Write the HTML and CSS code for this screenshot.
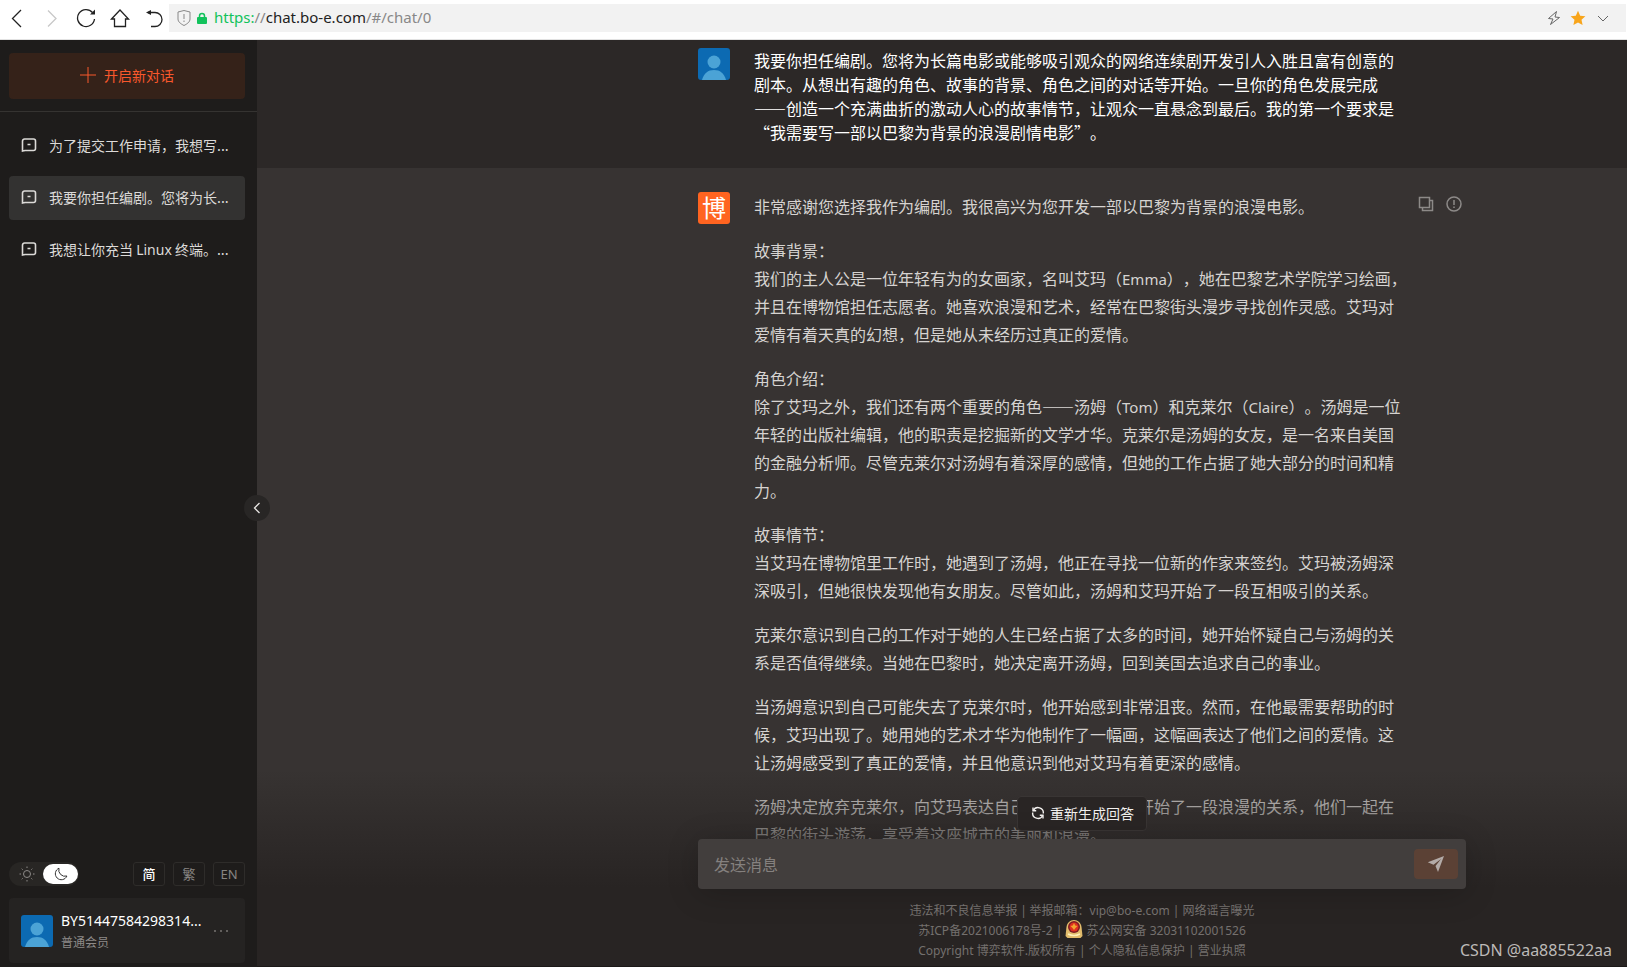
FILE: index.html
```html
<!DOCTYPE html>
<html lang="zh-CN">
<head>
<meta charset="utf-8">
<title>chat.bo-e.com</title>
<link rel="stylesheet" href="styles.css">
</head>
<body>
<header class="browser">
  <button class="nav-btn" aria-label="后退"><svg width="20" height="20" viewBox="0 0 20 20"><path d="M13 2 4.500 10.500 13 19"/></svg></button>
  <button class="nav-btn nav-off" aria-label="前进"><svg width="20" height="20" viewBox="0 0 20 20"><path d="M6 2.500 14 10.500 6 18.500"/></svg></button>
  <button class="nav-btn" aria-label="刷新"><svg width="20" height="20" viewBox="0 0 20 20"><path d="M16.500 4.500A8.500 8.500 0 1 0 18.500 11"/><path class="solid" d="M19 1.500v5h-5z"/></svg></button>
  <button class="nav-btn" aria-label="主页"><svg width="20" height="20" viewBox="0 0 20 20"><path d="M1.500 11 10 2l8.500 9H15.500v7.500h-11V11z"/></svg></button>
  <button class="nav-btn" aria-label="撤销"><svg width="20" height="20" viewBox="0 0 20 20"><path d="M4 4.500h7a7 7 0 0 1 0 14H7"/><path class="solid" d="M2 4.500 7 2v5z"/></svg></button>
  <div class="address">
    <svg class="shield" width="14" height="18" viewBox="0 0 14 18"><path d="M7 1.500 13 3v7c0 3-3 5-6 6.500C4 15 1 13 1 10V3z"/><path d="M7 5v5M7 11.500v1.500"/></svg>
    <svg class="lock" width="10" height="12" viewBox="0 0 10 12"><rect y="5" width="10" height="7" rx="1"/><path d="M2.500 6V4a2.500 2.500 0 0 1 5 0v2"/></svg>
    <div class="url"><span class="scheme">https:</span>//<span class="host">chat.bo-e.com</span>/#/chat/0</div>
    <svg class="tool" width="14" height="16" viewBox="0 0 14 16"><path d="M9.500 1.500 1.500 8.500 6 9 3.500 14.500 12.500 7.500 8 7z"/></svg>
    <svg class="star" width="16" height="16" viewBox="0 0 16 16"><path d="M8 .8l2.200 4.900 5.200.6-3.900 3.500 1.100 5.300L8 12.400l-4.600 2.700 1.100-5.300L.6 6.300l5.200-.6z"/></svg>
    <svg class="tool" width="12" height="16" viewBox="0 0 12 16"><path d="m1 6 5 5 5-5"/></svg>
  </div>
</header>

<div class="app">
  <aside class="sidebar">
    <div class="new-wrap">
      <button class="new-chat"><svg width="16" height="16" viewBox="0 0 16 16"><path d="M8 0v16M0 8h16"/></svg>开启新对话</button>
    </div>
    <nav class="history">
      <a class="item" href="#1"><svg width="16" height="16" viewBox="0 0 16 16"><path d="M1.500 14V4a2 2 0 0 1 2-2h9a2 2 0 0 1 2 2v7.500a2 2 0 0 1-2 2H4zM6.500 7.500h3"/></svg><span>为了提交工作申请，我想写...</span></a>
      <a class="item current" href="#2"><svg width="16" height="16" viewBox="0 0 16 16"><path d="M1.500 14V4a2 2 0 0 1 2-2h9a2 2 0 0 1 2 2v7.500a2 2 0 0 1-2 2H4zM6.500 7.500h3"/></svg><span>我要你担任编剧。您将为长...</span></a>
      <a class="item" href="#3"><svg width="16" height="16" viewBox="0 0 16 16"><path d="M1.500 14V4a2 2 0 0 1 2-2h9a2 2 0 0 1 2 2v7.500a2 2 0 0 1-2 2H4zM6.500 7.500h3"/></svg><span>我想让你充当 <span lang="en">Linux</span> 终端。...</span></a>
    </nav>
    <div class="prefs">
      <button class="theme" role="switch" aria-checked="true" aria-label="深色模式">
        <span class="sun"><svg width="16" height="16" viewBox="0 0 16 16"><circle cx="8" cy="8" r="3.500"/><path d="M8 .5v1.500M8 14v1.500M.5 8H2M14 8h1.500M2.700 2.700l1 1M12.300 12.300l1 1M13.300 2.700l-1 1M3.700 12.300l-1 1"/></svg></span>
        <span class="moon"><svg width="14" height="14" viewBox="0 0 14 14"><path d="M5 1.200A6 6 0 1 0 12.900 9 6.300 6.300 0 0 1 5 1.200z"/></svg></span>
      </button>
      <button class="lang on">简</button>
      <button class="lang">繁</button>
      <button class="lang" lang="en">EN</button>
    </div>
    <div class="account">
      <svg class="avatar" width="32" height="32" viewBox="0 0 32 32"><rect width="32" height="32" rx="3" fill="#0c6ab2"/><circle cx="16" cy="14" r="6.500" fill="#4ba3d6"/><path d="M4 32c2-7 6-10 12-10s10 3 12 10z" fill="#4ba3d6"/></svg>
      <div class="who"><div class="name" lang="en">BY51447584298314...</div><div class="level">普通会员</div></div>
      <button class="more" aria-label="更多"><svg width="16" height="4" viewBox="0 0 16 4"><circle cx="2" cy="2" r="1"/><circle cx="8" cy="2" r="1"/><circle cx="14" cy="2" r="1"/></svg></button>
    </div>
    <button class="collapse" aria-label="收起"><svg width="10" height="12" viewBox="0 0 10 12"><path d="M7.500 1 2.500 6l5 5"/></svg></button>
  </aside>

  <main class="chat">
    <section class="row user">
      <div class="column">
        <svg class="avatar" width="32" height="32" viewBox="0 0 32 32"><rect width="32" height="32" rx="3" fill="#0c6ab2"/><circle cx="16" cy="14" r="6.500" fill="#4ba3d6"/><path d="M4 32c2-7 6-10 12-10s10 3 12 10z" fill="#4ba3d6"/></svg>
        <p class="text">我要你担任编剧。您将为长篇电影或能够吸引观众的网络连续剧开发引人入胜且富有创意的剧本。从想出有趣的角色、故事的背景、角色之间的对话等开始。一旦你的角色发展完成——创造一个充满曲折的激动人心的故事情节，让观众一直悬念到最后。我的第一个要求是“我需要写一部以巴黎为背景的浪漫剧情电影”。</p>
      </div>
    </section>
    <section class="row bot">
      <div class="column">
        <div class="avatar logo">博</div>
        <div class="text">
          <p>非常感谢您选择我作为编剧。我很高兴为您开发一部以巴黎为背景的浪漫电影。</p>
          <p>故事背景：<br>我们的主人公是一位年轻有为的女画家，名叫艾玛（<span lang="en">Emma</span>），她在巴黎艺术学院学习绘画，并且在博物馆担任志愿者。她喜欢浪漫和艺术，经常在巴黎街头漫步寻找创作灵感。艾玛对爱情有着天真的幻想，但是她从未经历过真正的爱情。</p>
          <p>角色介绍：<br>除了艾玛之外，我们还有两个重要的角色——汤姆（<span lang="en">Tom</span>）和克莱尔（<span lang="en">Claire</span>）。汤姆是一位年轻的出版社编辑，他的职责是挖掘新的文学才华。克莱尔是汤姆的女友，是一名来自美国的金融分析师。尽管克莱尔对汤姆有着深厚的感情，但她的工作占据了她大部分的时间和精力。</p>
          <p>故事情节：<br>当艾玛在博物馆里工作时，她遇到了汤姆，他正在寻找一位新的作家来签约。艾玛被汤姆深深吸引，但她很快发现他有女朋友。尽管如此，汤姆和艾玛开始了一段互相吸引的关系。</p>
          <p>克莱尔意识到自己的工作对于她的人生已经占据了太多的时间，她开始怀疑自己与汤姆的关系是否值得继续。当她在巴黎时，她决定离开汤姆，回到美国去追求自己的事业。</p>
          <p>当汤姆意识到自己可能失去了克莱尔时，他开始感到非常沮丧。然而，在他最需要帮助的时候，艾玛出现了。她用她的艺术才华为他制作了一幅画，这幅画表达了他们之间的爱情。这让汤姆感受到了真正的爱情，并且他意识到他对艾玛有着更深的感情。</p>
          <p>汤姆决定放弃克莱尔，向艾玛表达自己的爱意。他们便开始了一段浪漫的关系，他们一起在巴黎的街头游荡，享受着这座城市的美丽和浪漫。</p>
        </div>
        <div class="actions">
          <button aria-label="复制"><svg width="16" height="16" viewBox="0 0 16 16"><path d="M1.500 1.500h10v10h-10zM11.500 4.500h3v10h-10v-3"/></svg></button>
          <button aria-label="反馈"><svg width="16" height="16" viewBox="0 0 16 16"><circle cx="8" cy="8" r="7"/><path d="M8 4v5M8 10.500V12"/></svg></button>
        </div>
      </div>
    </section>

    <footer class="dock">
      <div class="dock-column">
        <button class="regen"><svg width="14" height="14" viewBox="0 0 14 14"><path d="M2.300 4.500A5.300 5.300 0 0 1 12.300 7.500M11.700 9.500A5.300 5.300 0 0 1 1.700 6.500"/><path d="M2 1.500v3.200h3.200M12 12.500V9.300H8.800"/></svg>重新生成回答</button>
        <form class="composer">
          <input class="message" type="text" placeholder="发送消息" aria-label="发送消息">
          <button class="send" type="button" aria-label="发送"><svg width="18" height="18" viewBox="0 0 18 18"><path d="M17 1 .8 7.200l5.700 2.600L14 4 8.500 11l2.500 6z"/></svg></button>
        </form>
        <div class="legal">
          <div><a href="#r">违法和不良信息举报</a> <span lang="en">|</span> 举报邮箱：<span lang="en">vip@bo-e.com | </span><a href="#y">网络谣言曝光</a></div>
          <div>苏<span lang="en">ICP</span>备<span lang="en">2021006178</span>号<span lang="en">-2 | </span><svg class="police" width="18" height="18" viewBox="0 0 18 18"><path d="M9 0c4 0 7 3 7.500 7l1 9-2 2h-13l-2-2 1-9C2 3 5 0 9 0z" fill="#e2bc6c"/><circle cx="9" cy="7" r="6" fill="#7d1c22"/><circle cx="9" cy="7" r="4.500" fill="#df2f20"/><path d="m9 3 1.200 2.500 2.300.5-2 2L9 10 7.500 8l-2-2 2.300-.5z" fill="#f2a52f"/><path d="M3 14c4 2 8 2 12 0" stroke="#fff0b8" stroke-width="1.500"/></svg><span lang="en"> </span>苏公网安备<span lang="en"> 32031102001526</span></div>
          <div><span lang="en">Copyright </span>博弈软件.版权所有<span lang="en"> | </span><a href="#p">个人隐私信息保护</a><span lang="en"> | </span><a href="#l">营业执照</a></div>
        </div>
      </div>
      <span class="mark" lang="en">CSDN @aa885522aa</span>
    </footer>
  </main>
</div>
</body>
</html>
```
FILE: styles.css
```css
* { box-sizing: border-box; }
body {
  margin: 0;
  height: 100vh;
  display: flex;
  flex-direction: column;
  overflow: hidden;
  background: #1e1c1b;
  font-family: "Noto Sans CJK SC", "Noto Sans", sans-serif;
  font-size: 14px;
  text-spacing-trim: space-all;
}
button, input { font: inherit; color: inherit; border: 0; background: none; padding: 0; }
button { cursor: pointer; }
a { color: inherit; text-decoration: none; }
p { margin: 0; }
svg { flex: none; fill: none; stroke: currentColor; }
[lang="en"] { font-family: "Noto Sans", "Noto Sans CJK SC", sans-serif; }
span[lang="en"] { line-height: 1; }

/* Browser toolbar */
.browser {
  flex: none;
  display: flex;
  align-items: center;
  height: 40px;
  padding: 0 1px 4px 8px;
  background: #fff;
  border-bottom: 1px solid #e2e2e2;
  color: #222;
}
.nav-btn { display: flex; width: 20px; margin-right: 14px; stroke-width: 1.3; }
.nav-off { color: #c8c8c8; }
.nav-btn:nth-child(5) { margin-right: 5px; }
.browser .solid { fill: currentColor; stroke: none; }
.address {
  flex: 1;
  display: flex;
  align-items: center;
  height: 28px;
  padding: 0 17px 0 8px;
  background: #f2f2f2;
  color: #888;
}
.lock { margin: 0 7px 0 6px; color: #12c25c; stroke-width: 1.5; }
.lock rect { fill: currentColor; stroke: none; }
.url { flex: 1; font: 15px/20px "Noto Sans", sans-serif; padding-bottom: 1px; }
.scheme { color: #12c25c; }
.host { color: #222; }
.tool { color: #666; }
.star { margin: 0 11px 0 9px; fill: #f8a51b; stroke: none; }

/* Sidebar */
.app { flex: 1; min-height: 0; display: flex; }
.sidebar {
  position: relative;
  flex: none;
  display: flex;
  flex-direction: column;
  width: 257px;
  padding-bottom: 4px;
  background: #1e1c1b;
  color: #dcdad8;
}
.new-wrap { padding: 13px 12px 12px 9px; border-bottom: 1px solid #353331; }
.new-chat {
  display: flex;
  align-items: center;
  justify-content: center;
  gap: 8px;
  width: 100%;
  height: 46px;
  padding-bottom: 2px;
  border-radius: 4px;
  background: #352219;
  color: #f9582c;
}
.history { flex: 1; display: flex; flex-direction: column; gap: 8px; padding: 12px 12px 0 9px; }
.item { display: flex; align-items: center; gap: 12px; height: 44px; padding: 0 12px 2px; border-radius: 4px; white-space: nowrap; }
.item svg { stroke-width: 1.6; }
.current { background: #333231; }
.prefs { display: flex; gap: 8px; padding: 0 12px 12px 9px; }
.theme { display: flex; align-items: center; width: 70px; height: 24px; margin-right: auto; padding: 1px; border-radius: 12px; background: #282624; color: #8d8a88; }
.sun, .moon { flex: 1; display: flex; align-items: center; justify-content: center; height: 20px; border-radius: 10px; }
.moon { flex: 0 0 35px; background: #fff; color: #333; }
.lang { width: 32px; height: 24px; border: 1px solid #2e2c2a; border-radius: 3px; color: #878482; font-size: 13px; line-height: 20px; }
.on { color: #fff; font-weight: 500; }
.account { display: flex; align-items: center; height: 65px; margin: 0 12px 0 9px; padding: 0 16px 0 12px; border-radius: 4px; background: #252322; }
.who { flex: 1; margin-left: 8px; white-space: nowrap; }
.name { color: #fff; line-height: 22px; }
.level { color: #8d8a88; font-size: 12px; line-height: 20px; }
.more { display: flex; color: #777472; }
.more svg { fill: currentColor; stroke: none; }
.collapse {
  position: absolute;
  right: -13px;
  top: calc(50% - 9px);
  z-index: 3;
  display: flex;
  align-items: center;
  justify-content: center;
  width: 26px;
  height: 26px;
  border-radius: 50%;
  background: #282625;
  color: #e6e4e2;
  stroke-width: 1.3;
}

/* Conversation */
.chat { position: relative; flex: 1; min-width: 0; overflow: hidden; background: #373332; }
.row { padding-left: 441px; }
.user { padding-top: 8px; padding-bottom: 24px; background: #2c2827; color: #fff; }
.bot { padding-top: 24px; color: #d6d3d1; }
.column { display: flex; max-width: 768px; }
.avatar { flex: none; width: 32px; height: 32px; stroke: none; }
.logo { border-radius: 3px; background: #ff6420; color: #fff; font-size: 24px; line-height: 30px; text-align: center; }
.text { width: 654px; margin-left: 24px; font-size: 16px; line-height: 24px; }
.text span[lang="en"] { font-size: 15px; }
.bot .text { display: flex; flex-direction: column; gap: 16px; line-height: 28px; }
.actions { display: flex; align-items: flex-start; gap: 12px; margin-left: auto; padding: 4px 4px 0 0; color: #8d8a88; stroke-width: 1.5; }
.actions button { display: flex; }

/* Composer and legal notes */
.dock {
  position: absolute;
  left: 0;
  right: 0;
  bottom: 0;
  padding: 26px 0 6px 441px;
  background: linear-gradient(rgba(40, 36, 35, 0), #282423 60%);
  border-bottom: 1px solid #1c1918;
}
.dock-column { display: flex; flex-direction: column; align-items: center; max-width: 768px; }
.regen {
  display: flex;
  align-items: center;
  gap: 5px;
  height: 35px;
  padding: 0 12px 2px 13px;
  border: 1px solid #393534;
  border-radius: 4px;
  background: #292524;
  color: #f2f0ee;
}
.regen svg { stroke-width: 1.4; }
.composer {
  display: flex;
  align-items: center;
  width: 100%;
  height: 50px;
  margin: 8px 0 11px;
  padding: 0 8px 0 16px;
  border-radius: 4px;
  background: #423e3d;
  box-shadow: 0 4px 32px rgba(0, 0, 0, 0.2);
}
.message { flex: 1; font-size: 16px; outline: 0; }
.message::placeholder { color: #85817f; opacity: 1; }
.send { display: flex; align-items: center; justify-content: center; width: 44px; height: 30px; border-radius: 4px; background: #5b4135; color: #b3aba8; }
.send svg { fill: currentColor; stroke: none; }
.legal { color: #74706e; font-size: 12px; line-height: 20px; text-align: center; white-space: nowrap; }
.legal div { height: 20px; }
.legal .police { vertical-align: text-bottom; stroke: none; }
.mark { position: absolute; right: 15px; bottom: 8px; color: #bdbab8; font-size: 16px; }
```
